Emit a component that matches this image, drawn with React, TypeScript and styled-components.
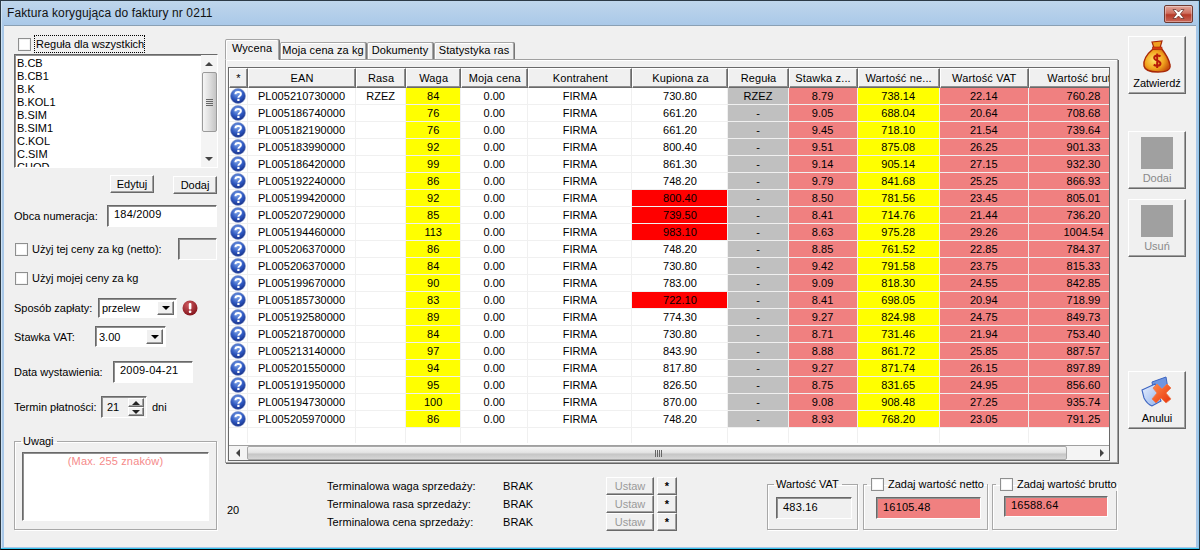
import React from "react";
import styled, { createGlobalStyle, css } from "styled-components";

const Global = createGlobalStyle`
  html, body { margin: 0; padding: 0; background: #000; }
  body { width: 1200px; height: 550px; overflow: hidden; font-family: "Liberation Sans", Arial, sans-serif; font-size: 11px; color: #000; }
  * { box-sizing: border-box; }
`;

const inset = css`
  border: 1px solid;
  border-color: #696969 #fff #fff #696969;
  box-shadow: inset 1px 1px 0 #8f8f8f, 0 0 0 0 transparent;
`;
const raised = css`
  border: 1px solid;
  border-color: #fff #696969 #696969 #fff;
  box-shadow: inset -1px -1px 0 #a0a0a0;
  background: #f0f0f0;
`;

const Win = styled.div`
  width: 1200px; height: 550px; display: flex; flex-direction: column;
  background: linear-gradient(#bfd6ec, #a9c8e8 25px);
  border: 1px solid #2c3a46; border-bottom-color: #000;
  padding: 0 3px 2px 3px;
  box-shadow: inset 0 -1px 0 #35c4ee, inset 1px 0 0 #cfe2f3, inset -1px 0 0 #8fc8ee;
`;
const TitleBar = styled.div`
  height: 24px; flex: none; display: flex; align-items: center; justify-content: space-between;
  padding-left: 3px; font-size: 12px; letter-spacing: 0.12px; color: #111;
`;
const CloseBtn = styled.div`
  width: 29px; height: 18px; margin-right: 3px; margin-top: 1px; display: flex; align-items: center; justify-content: center;
  border: 1px solid #6e3b32; border-radius: 2px;
  background: linear-gradient(#e0a79c 0, #cf6f5f 45%, #b63a28 55%, #c9685a 100%);
  box-shadow: inset 0 0 0 1px rgba(255,255,255,.35);
`;
const Body = styled.div`
  flex: 1; min-height: 0; display: flex; background: #f0f0f0; border: 1px solid #8aa0b4; border-width: 1px 0 0 0;
`;
const LeftCol = styled.div`
  width: 204px; margin-left: 10px; flex: none; display: flex; flex-direction: column;
`;
const Center = styled.div`
  width: 893px; margin-left: 7px; flex: none; display: flex; flex-direction: column;
`;
const RightCol = styled.div`
  width: 58px; margin-left: 10px; flex: none; display: flex; flex-direction: column;
`;
const Row = styled.div<{ $top: number; $h: number }>`
  display: flex; align-items: center; flex: none;
  margin-top: ${p => p.$top}px; height: ${p => p.$h}px;
`;
const Label = styled.span<{ $w?: number }>`
  white-space: nowrap; ${p => p.$w !== undefined && `width:${p.$w}px; flex:none;`}
`;
const Check = styled.span<{ $left?: number }>`
  width: 13px; height: 13px; flex: none; background: #fff; margin-left: ${p => p.$left ?? 1}px; margin-right: 4px;
  border: 1px solid #8e8f8f; box-shadow: inset 0 0 0 1px #f3f3f3;
`;
const Focus = styled.span`
  outline: 1px dotted #000; outline-offset: 0; padding: 2px 0 2px 1px; line-height: 12px;
`;
const ListBox = styled.div`
  ${inset}; width: 204px; height: 114px; margin-top: 2px; flex: none; background: #fff; display: flex; overflow: hidden;
`;
const ListItems = styled.div`
  flex: 1; padding: 2px 0 0 2px; overflow: hidden;
`;
const ListItem = styled.div`
  height: 13px; line-height: 13px;
`;
const VScroll = styled.div`
  width: 16px; flex: none; display: flex; flex-direction: column; align-items: center; background: #f4f4f4; justify-content: space-between;
`;
const Arrow = styled.span<{ $dir: "up" | "down" | "left" | "right"; $c?: string }>`
  width: 0; height: 0; flex: none; display: block;
  ${p => {
    const c = p.$c ?? "#444";
    if (p.$dir === "up") return `border:4px solid transparent;border-top:0;border-bottom:4px solid ${c};`;
    if (p.$dir === "down") return `border:4px solid transparent;border-bottom:0;border-top:4px solid ${c};`;
    if (p.$dir === "left") return `border:4px solid transparent;border-left:0;border-right:4px solid ${c};`;
    return `border:4px solid transparent;border-right:0;border-left:4px solid ${c};`;
  }}
`;
const VArrowBox = styled.div`
  height: 17px; display: flex; align-items: center; justify-content: center; flex: none;
`;
const VThumb = styled.div`
  width: 15px; height: 60px; flex: none; border: 1px solid #9a9a9a; border-radius: 2px;
  background: linear-gradient(90deg, #f6f6f6, #dcdcdc 55%, #c4c4c4);
  display: flex; flex-direction: column; align-items: center; justify-content: center; gap: 1px;
`;
const Grip = styled.i`
  display: block; width: 7px; height: 1px; background: #666;
`;
const Btn = styled.button<{ $w: number; $h?: number; $left?: number; $disabled?: boolean; $drop?: number }>`
  ${raised}; padding: 0; font: inherit; width: ${p => p.$w}px; height: ${p => p.$h ?? 18}px; flex: none;
  margin-left: ${p => p.$left ?? 0}px; color: ${p => (p.$disabled ? "#9a9a9a" : "#000")};
  ${p => p.$drop ? `position: relative; top: ${p.$drop}px;` : ""}
`;
const Input = styled.div<{ $w: number; $h?: number; $left?: number; $bg?: string; $top?: number }>`
  ${inset}; width: ${p => p.$w}px; height: ${p => p.$h ?? 22}px; flex: none; margin-left: ${p => p.$left ?? 0}px;
  background: ${p => p.$bg ?? "#fff"}; padding: ${p => p.$top ?? 2}px 0 0 6px; line-height: 13px; letter-spacing: .2px;
`;
const Select = styled.div<{ $w: number; $left: number; $h: number }>`
  ${inset}; width: ${p => p.$w}px; height: ${p => p.$h}px; margin-left: ${p => p.$left}px; flex: none; background: #fff;
  display: flex; align-items: center; justify-content: space-between; padding: 2px 2px 2px 3px;
`;
const DropBtn = styled.div`
  ${raised}; width: 17px; height: 100%; display: flex; align-items: center; justify-content: center;
`;
const Spin = styled.div`
  ${inset}; width: 46px; height: 22px; margin-left: 3px; background: #f0f0f0; display: flex; align-items: center;
  padding: 1px 2px 1px 5px; justify-content: space-between;
`;
const SpinBtns = styled.div`
  width: 16px; height: 100%; display: flex; flex-direction: column;
`;
const SpinBtn = styled.div`
  ${raised}; flex: 1; display: flex; align-items: center; justify-content: center;
`;
const Group = styled.fieldset<{ $w: number; $h: number; $top: number; $left?: number }>`
  margin: ${p => p.$top}px 0 0 ${p => p.$left ?? 0}px; padding: 0; width: ${p => p.$w}px; height: ${p => p.$h}px; flex: none;
  border: 1px solid #a8a8a8; box-shadow: 1px 1px 0 #fff, inset 1px 1px 0 #fff; min-width: 0;
`;
const Legend = styled.legend<{ $left: number }>`
  margin-left: ${p => p.$left}px; padding: 0 3px 0 2px; height: 13px; line-height: 13px; display: flex; align-items: center; white-space: nowrap;
`;
const GroupBody = styled.div<{ $left: number; $top: number }>`
  margin: ${p => p.$top}px 0 0 ${p => p.$left}px;
`;
const NotesBox = styled.div`
  ${inset}; width: 187px; height: 69px; background: #fff; color: #f58a8a; text-align: center; padding-top: 2px; line-height: 13px; letter-spacing: .15px;
`;
const Tabs = styled.div`
  display: flex; align-items: flex-end; margin-top: 13px; height: 20px; flex: none; position: relative; z-index: 1;
`;
const Tab = styled.div<{ $w: number; $active?: boolean }>`
  width: ${p => p.$w}px; flex: none; margin-right: 1px; border: 1px solid #a5a5a5; border-bottom: 0;
  border-radius: 2px 2px 0 0; text-align: center; background: #f0f0f0; white-space: nowrap;
  height: ${p => (p.$active ? 20 : 17)}px; line-height: ${p => (p.$active ? 16 : 15)}px; letter-spacing: .1px;
  box-shadow: inset 1px 1px 0 #fff, 1px 0 0 #777;
  ${p => p.$active ? "margin-bottom: -1px; height: 21px; border-bottom: 1px solid #f0f0f0;" : ""}
`;
const Panel = styled.div`
  height: 404px; flex: none; width: 893px; border: 1px solid #a0a0a0; box-shadow: inset 1px 1px 0 #fff, 1px 1px 0 #666;
  padding: 7px 7px 2px 2px;
`;
const GridBox = styled.div`
  width: 882px; height: 394px; border: 1px solid #696969; box-shadow: 0 0 0 0 #fff; background: #fff;
  display: flex; flex-direction: column; overflow: hidden; outline: 1px solid transparent;
`;
const TableClip = styled.div`
  flex: 1; min-height: 0; overflow: hidden;
`;
const Table = styled.table`
  border-collapse: separate; border-spacing: 0; table-layout: fixed; width: 910px;
`;
const Th = styled.th`
  ${raised}; height: 20px; padding: 0; font-weight: normal; font-size: 11px; overflow: hidden; white-space: nowrap; text-align: center; letter-spacing: .15px;
  box-shadow: inset -1px -1px 0 #8e8e8e;
`;
const Td = styled.td<{ $bg?: string; $blank?: boolean }>`
  height: ${p => (p.$blank ? 15 : 17)}px; padding: 0; text-align: center; white-space: nowrap; overflow: hidden; line-height: 15px;
  border-right: 1px solid #f0f0f0; border-bottom: ${p => (p.$blank ? 0 : 1)}px solid #f0f0f0;
  background: ${p => p.$bg ?? "#fff"}; letter-spacing: .02px;
`;
const HScroll = styled.div`
  height: 15px; flex: none; background: #f4f4f4; display: flex; align-items: center; border-top: 1px solid #a0a0a0;
`;
const HArrow = styled.div<{ $w: number; $end?: boolean }>`
  width: ${p => p.$w}px; flex: none; display: flex; align-items: center; justify-content: ${p => (p.$end ? "flex-end" : "center")};
  padding-right: ${p => (p.$end ? 5 : 0)}px;
`;
const HThumb = styled.div`
  width: 820px; height: 14px; flex: none; border: 1px solid #a8a8a8; border-radius: 2px;
  background: linear-gradient(#f4f4f4, #e4e4e4 45%, #c6c6c6 60%, #d6d6d6);
  display: flex; align-items: center; justify-content: flex-end; gap: 1px; padding-right: 404px;
`;
const HGrip = styled.i`
  display: block; width: 1px; height: 7px; background: #666;
`;
const BottomRow = styled.div`
  display: flex; align-items: flex-start; flex: 1; min-height: 0;
`;
const Count = styled.div`
  width: 100px; margin-left: 2px; margin-top: 41px; flex: none;
`;
const Terminal = styled.div`
  display: grid; grid-template-columns: 176px 103px 48px 23px; grid-auto-rows: 18px; margin-top: 14px; flex: none; align-items: center; letter-spacing: .05px;
`;
const StarBtn = styled(Btn)`
  margin-left: 3px; font-weight: bold;
`;
const BigBtn = styled.button<{ $top: number; $disabled?: boolean }>`
  ${raised}; padding: 3px 0 0; font: inherit; width: 58px; height: 58px; flex: none; margin-top: ${p => p.$top}px;
  display: flex; flex-direction: column; align-items: center; justify-content: flex-start; gap: 3px;
  color: ${p => (p.$disabled ? "#8a8a8a" : "#000")};
`;
const GreySq = styled.span`
  width: 32px; height: 32px; display: block; background: #a0a0a0; margin-top: 2px; flex: none;
`;
const IconBox = styled.span`
  width: 32px; height: 34px; flex: none; display: block;
`;

const cols = [19, 108, 50, 55, 67, 104, 96, 60, 69, 82, 89, 110];
const headers = ["*", "EAN", "Rasa", "Waga", "Moja cena", "Kontrahent", "Kupiona za", "Reguła", "Stawka z...", "Wartość ne...", "Wartość VAT", "Wartość brutto"];
type R = [string, number, string, string, string, string, string, boolean?];
const rows: R[] = [
  ["PL005210730000", 84, "730.80", "8.79", "738.14", "22.14", "760.28"],
  ["PL005186740000", 76, "661.20", "9.05", "688.04", "20.64", "708.68"],
  ["PL005182190000", 76, "661.20", "9.45", "718.10", "21.54", "739.64"],
  ["PL005183990000", 92, "800.40", "9.51", "875.08", "26.25", "901.33"],
  ["PL005186420000", 99, "861.30", "9.14", "905.14", "27.15", "932.30"],
  ["PL005192240000", 86, "748.20", "9.79", "841.68", "25.25", "866.93"],
  ["PL005199420000", 92, "800.40", "8.50", "781.56", "23.45", "805.01", true],
  ["PL005207290000", 85, "739.50", "8.41", "714.76", "21.44", "736.20", true],
  ["PL005194460000", 113, "983.10", "8.63", "975.28", "29.26", "1004.54", true],
  ["PL005206370000", 86, "748.20", "8.85", "761.52", "22.85", "784.37"],
  ["PL005206370000", 84, "730.80", "9.42", "791.58", "23.75", "815.33"],
  ["PL005199670000", 90, "783.00", "9.09", "818.30", "24.55", "842.85"],
  ["PL005185730000", 83, "722.10", "8.41", "698.05", "20.94", "718.99", true],
  ["PL005192580000", 89, "774.30", "9.27", "824.98", "24.75", "849.73"],
  ["PL005218700000", 84, "730.80", "8.71", "731.46", "21.94", "753.40"],
  ["PL005213140000", 97, "843.90", "8.88", "861.72", "25.85", "887.57"],
  ["PL005201550000", 94, "817.80", "9.27", "871.74", "26.15", "897.89"],
  ["PL005191950000", 95, "826.50", "8.75", "831.65", "24.95", "856.60"],
  ["PL005194730000", 100, "870.00", "9.08", "908.48", "27.25", "935.74"],
  ["PL005205970000", 86, "748.20", "8.93", "768.20", "23.05", "791.25"],
];
const PINK = "#f08080", YEL = "#ffff00", GRAY = "#c0c0c0", RED = "#ff0000";

const Help = () => (
  <svg width="17" height="16" viewBox="0 0 17 16" style={{ display: "block", margin: "0 0 0 1px" }}>
    <defs>
      <radialGradient id="hb" cx="45%" cy="30%" r="75%">
        <stop offset="0" stopColor="#7fa6ea" />
        <stop offset=".55" stopColor="#2f58c0" />
        <stop offset="1" stopColor="#11287e" />
      </radialGradient>
    </defs>
    <circle cx="8" cy="8" r="7.5" fill="url(#hb)" stroke="#8a9ac8" strokeWidth=".6" />
    <path d="M5.4 6.2 C5.4 3.2 10.9 3.1 10.9 6.1 C10.9 8 8.4 7.9 8.4 9.7" fill="none" stroke="#fff" strokeWidth="2" />
    <rect x="7.3" y="10.8" width="2.2" height="2.2" fill="#fff" />
  </svg>
);

const Bag = () => (
  <svg width="32" height="34" viewBox="0 0 32 34">
    <defs>
      <radialGradient id="bag" cx="40%" cy="50%" r="60%">
        <stop offset="0" stopColor="#ffe36a" />
        <stop offset=".6" stopColor="#f2a51e" />
        <stop offset="1" stopColor="#c9540c" />
      </radialGradient>
    </defs>
    <path d="M11 2 L21 1 L19 8 L13 8 Z" fill="#f0a020" stroke="#a82808" strokeWidth="1.2" />
    <path d="M12 9 C6 14 2 20 3 26 C4 31 10 32 17 32 C25 32 30 30 29 25 C28 19 24 13 20 8 Z" fill="url(#bag)" stroke="#a82808" strokeWidth="1.4" />
    <rect x="11.5" y="7" width="9.5" height="2.5" fill="#d83a10" stroke="#a82808" strokeWidth=".6" />
    <path d="M19.5 16.5 C18 14.8 13 15 13.2 18 C13.4 21 19.5 20.4 19.5 23.5 C19.5 26.2 14.5 26.4 12.8 24.5 M16.2 13.5 V28" fill="none" stroke="#b81a08" strokeWidth="2" />
  </svg>
);

const Cancel = () => (
  <svg width="32" height="34" viewBox="0 0 32 34">
    <defs>
      <linearGradient id="fo" x1="0" y1="0" x2="1" y2="1">
        <stop offset="0" stopColor="#e8f0ff" />
        <stop offset="1" stopColor="#8fb0ea" />
      </linearGradient>
      <linearGradient id="xx" x1="0" y1="0" x2="1" y2="1">
        <stop offset="0" stopColor="#ff8a4a" />
        <stop offset="1" stopColor="#e8340c" />
      </linearGradient>
    </defs>
    <path d="M11 7 L25 2 L27 14 L14 26 Z" fill="#6f96e0" stroke="#3c64c0" />
    <path d="M1 15 L14 9 L20 26 L11 31 Q6 29 3 23 Z" fill="url(#fo)" stroke="#3c64c0" strokeWidth="1.1" />
    <path d="M12 13 L16 9 L21 14 L26 9 L30 13 L25 18 L30 24 L25 28 L20 23 L15 28 L11 24 L16 18 Z" fill="url(#xx)" stroke="#ec7a50" strokeWidth=".8" />
  </svg>
);

const Err = () => (
  <svg width="16" height="16" viewBox="0 0 16 16" style={{ marginLeft: 5, flex: "none" }}>
    <defs>
      <radialGradient id="er" cx="40%" cy="30%" r="80%">
        <stop offset="0" stopColor="#d05a60" />
        <stop offset="1" stopColor="#7a0c14" />
      </radialGradient>
    </defs>
    <circle cx="8" cy="8" r="7.5" fill="url(#er)" />
    <rect x="6.8" y="3" width="2.6" height="6.4" rx="1" fill="#fff" />
    <rect x="6.8" y="10.4" width="2.6" height="2.6" rx="1" fill="#fff" />
  </svg>
);

const CloseX = () => (
  <svg width="13" height="10" viewBox="0 0 13 10">
    <path d="M1 0.5 H4 L6.5 3 L9 0.5 H12 L8.4 5 L12 9.5 H9 L6.5 7 L4 9.5 H1 L4.6 5 Z" fill="#fff" stroke="#5a2a24" strokeWidth=".7" />
  </svg>
);

const listItems = ["B.CB", "B.CB1", "B.K", "B.KOL1", "B.SIM", "B.SIM1", "C.KOL", "C.SIM", "CHOD"];

export default function App() {
  return (
    <Win>
      <Global />
      <TitleBar>
        <span>Faktura korygująca do faktury nr 0211</span>
        <CloseBtn><CloseX /></CloseBtn>
      </TitleBar>
      <Body>
        <LeftCol>
          <Row $top={10} $h={16}>
            <Check $left={4} />
            <Focus>Reguła dla wszystkich</Focus>
          </Row>
          <ListBox>
            <ListItems>
              {listItems.map(i => <ListItem key={i}>{i}</ListItem>)}
            </ListItems>
            <VScroll>
              <VArrowBox><Arrow $dir="up" /></VArrowBox>
              <VThumb><Grip /><Grip /><Grip /><Grip /></VThumb>
              <div style={{ flex: 1 }} />
              <VArrowBox><Arrow $dir="down" /></VArrowBox>
            </VScroll>
          </ListBox>
          <Row $top={7} $h={18}>
            <Btn $w={44} $left={96}>Edytuj</Btn>
            <Btn $w={44} $left={19} $drop={1}>Dodaj</Btn>
          </Row>
          <Row $top={12} $h={22}>
            <Label $w={93}>Obca numeracja:</Label>
            <Input $w={110}>184/2009</Input>
          </Row>
          <Row $top={11} $h={22}>
            <Check />
            <Label $w={146}>Użyj tej ceny za kg (netto):</Label>
            <Input $w={39} $bg="#f0f0f0" />
          </Row>
          <Row $top={8} $h={20}>
            <Check />
            <Label>Użyj mojej ceny za kg</Label>
          </Row>
          <Row $top={10} $h={20}>
            <Label $w={84}>Sposób zapłaty:</Label>
            <Select $w={79} $left={0} $h={20}>
              <span>przelew</span>
              <DropBtn><Arrow $dir="down" $c="#000" /></DropBtn>
            </Select>
            <Err />
          </Row>
          <Row $top={8} $h={21}>
            <Label $w={81}>Stawka VAT:</Label>
            <Select $w={71} $left={0} $h={21}>
              <span>3.00</span>
              <DropBtn><Arrow $dir="down" $c="#000" /></DropBtn>
            </Select>
          </Row>
          <Row $top={14} $h={22}>
            <Label $w={99}>Data wystawienia:</Label>
            <Input $w={80}>2009-04-21</Input>
          </Row>
          <Row $top={13} $h={22}>
            <Label $w={84}>Termin płatności:</Label>
            <Spin>
              <span>21</span>
              <SpinBtns>
                <SpinBtn><Arrow $dir="up" $c="#222" /></SpinBtn>
                <SpinBtn><Arrow $dir="down" $c="#222" /></SpinBtn>
              </SpinBtns>
            </Spin>
            <Label style={{ marginLeft: 5 }}>dni</Label>
          </Row>
          <Group $w={203} $h={95} $top={17}>
            <Legend $left={6}>Uwagi</Legend>
            <GroupBody $left={7} $top={4}>
              <NotesBox>(Max. 255 znaków)</NotesBox>
            </GroupBody>
          </Group>
        </LeftCol>
        <Center>
          <Tabs>
            <Tab $w={54} $active>Wycena</Tab>
            <Tab $w={86}>Moja cena za kg</Tab>
            <Tab $w={66}>Dokumenty</Tab>
            <Tab $w={80}>Statystyka ras</Tab>
          </Tabs>
          <Panel>
            <GridBox>
              <TableClip>
                <Table>
                  <colgroup>
                    {cols.map((c, i) => <col key={i} style={{ width: c }} />)}
                  </colgroup>
                  <thead>
                    <tr>{headers.map(h => <Th key={h}>{h}</Th>)}</tr>
                  </thead>
                  <tbody>
                    {rows.map((r, i) => (
                      <tr key={i}>
                        <Td><Help /></Td>
                        <Td>{r[0]}</Td>
                        <Td>{i === 0 ? "RZEZ" : ""}</Td>
                        <Td $bg={YEL}>{r[1]}</Td>
                        <Td>0.00</Td>
                        <Td>FIRMA</Td>
                        <Td $bg={r[7] ? RED : undefined}>{r[2]}</Td>
                        <Td $bg={GRAY}>{i === 0 ? "RZEZ" : "-"}</Td>
                        <Td $bg={PINK}>{r[3]}</Td>
                        <Td $bg={YEL}>{r[4]}</Td>
                        <Td $bg={PINK}>{r[5]}</Td>
                        <Td $bg={PINK}>{r[6]}</Td>
                      </tr>
                    ))}
                    <tr>{cols.map((_, i) => <Td key={i} $blank />)}</tr>
                  </tbody>
                </Table>
              </TableClip>
              <HScroll>
                <HArrow $w={18}><Arrow $dir="left" /></HArrow>
                <HThumb><HGrip /><HGrip /><HGrip /><HGrip /></HThumb>
                <HArrow $w={42} $end><Arrow $dir="right" /></HArrow>
              </HScroll>
            </GridBox>
          </Panel>
          <BottomRow>
            <Count>20</Count>
            <Terminal>
              <Label>Terminalowa waga sprzedaży:</Label><span>BRAK</span><Btn $w={48} $disabled>Ustaw</Btn><StarBtn $w={20}>*</StarBtn>
              <Label>Terminalowa rasa sprzedaży:</Label><span>BRAK</span><Btn $w={48} $disabled>Ustaw</Btn><StarBtn $w={20}>*</StarBtn>
              <Label>Terminalowa cena sprzedaży:</Label><span>BRAK</span><Btn $w={48} $disabled>Ustaw</Btn><StarBtn $w={20}>*</StarBtn>
            </Terminal>
            <Group $w={91} $h={52} $top={15} $left={90}>
              <Legend $left={6}>Wartość VAT</Legend>
              <GroupBody $left={8} $top={6}>
                <Input $w={76} $bg="#f0f0f0" $top={3}>483.16</Input>
              </GroupBody>
            </Group>
            <Group $w={125} $h={52} $top={15} $left={5}>
              <Legend $left={3}><Check $left={2} />Zadaj wartość netto</Legend>
              <GroupBody $left={12} $top={6}>
                <Input $w={105} $bg={PINK} $top={3}>16105.48</Input>
              </GroupBody>
            </Group>
            <Group $w={125} $h={52} $top={15} $left={4}>
              <Legend $left={3}><Check $left={2} />Zadaj wartość brutto</Legend>
              <GroupBody $left={11} $top={5}>
                <Input $w={104} $h={21} $bg={PINK} $top={2}>16588.64</Input>
              </GroupBody>
            </Group>
          </BottomRow>
        </Center>
        <RightCol>
          <BigBtn $top={10}><IconBox><Bag /></IconBox>Zatwierdź</BigBtn>
          <BigBtn $top={37} $disabled><GreySq />Dodai</BigBtn>
          <BigBtn $top={10} $disabled><GreySq />Usuń</BigBtn>
          <BigBtn $top={114}><IconBox><Cancel /></IconBox>Anului</BigBtn>
        </RightCol>
      </Body>
    </Win>
  );
}
